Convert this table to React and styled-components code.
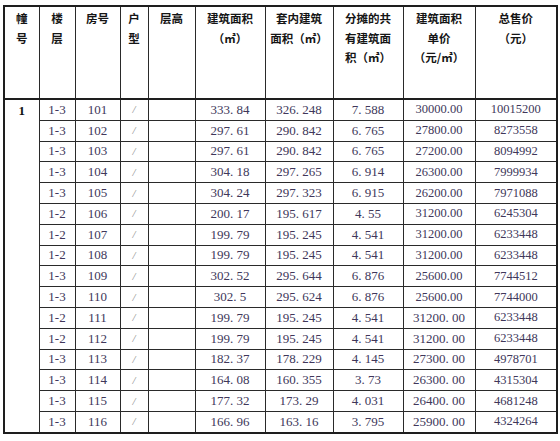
import React from "react";
import styled, { createGlobalStyle } from "styled-components";

const rows = [
  ["1-3", "101", "333.84", "326.248", "7.588", "30000.00", "10015200"],
  ["1-3", "102", "297.61", "290.842", "6.765", "27800.00", "8273558"],
  ["1-3", "103", "297.61", "290.842", "6.765", "27200.00", "8094992"],
  ["1-3", "104", "304.18", "297.265", "6.914", "26300.00", "7999934"],
  ["1-3", "105", "304.24", "297.323", "6.915", "26200.00", "7971088"],
  ["1-2", "106", "200.17", "195.617", "4.55", "31200.00", "6245304"],
  ["1-2", "107", "199.79", "195.245", "4.541", "31200.00", "6233448"],
  ["1-2", "108", "199.79", "195.245", "4.541", "31200.00", "6233448"],
  ["1-3", "109", "302.52", "295.644", "6.876", "25600.00", "7744512"],
  ["1-3", "110", "302.5", "295.624", "6.876", "25600.00", "7744000"],
  ["1-2", "111", "199.79", "195.245", "4.541", "31200.00", "6233448", true],
  ["1-2", "112", "199.79", "195.245", "4.541", "31200.00", "6233448", true],
  ["1-3", "113", "182.37", "178.229", "4.145", "27300.00", "4978701", true],
  ["1-3", "114", "164.08", "160.355", "3.73", "26300.00", "4315304", true],
  ["1-3", "115", "177.32", "173.29", "4.031", "26400.00", "4681248", true],
  ["1-3", "116", "166.96", "163.16", "3.795", "25900.00", "4324264", true],
];

const widths = [35, 36, 45, 28, 47, 70, 68, 70, 72, 82];

const headers = [
  ["幢", "号"],
  ["楼", "层"],
  ["房号"],
  ["户", "型"],
  ["层高"],
  ["建筑面积", "（㎡）"],
  ["套内建筑", "面积（㎡）"],
  ["分摊的共", "有建筑面", "积（㎡）"],
  ["建筑面积", "单价", "（元/㎡）"],
  ["总售价", "（元）"],
];

// song-style figures: the full stop takes a whole half-width cell
const wide = (s) => s.replace(".", ". ");

const GlobalStyle = createGlobalStyle`
  body {
    margin: 0;
    background: #ffffff;
  }
`;

const Page = styled.div`
  padding: 5px 0 0 3px;
`;

const Sheet = styled.table`
  width: 553px;
  border-collapse: collapse;
  table-layout: fixed;
  border: 2px solid #1e1e1e;
`;

const HeadCell = styled.th`
  height: 89px;
  padding: 2px 0 0;
  vertical-align: top;
  border: 1px solid #2a2a2a;
  border-bottom: 2px solid #1e1e1e;
  font-family: "Noto Sans CJK SC", sans-serif;
  font-size: 11.5px;
  font-weight: 700;
  line-height: 19.5px;
  color: #151515;
  text-align: center;
`;

const Cell = styled.td`
  height: 19.8px;
  padding: 0;
  border: 1px solid #2a2a2a;
  text-align: center;
  vertical-align: middle;
  color: #40375a;
  font-family: "Liberation Serif", serif;
  font-size: ${(p) => (p.$song ? "13px" : "12.5px")};
  white-space: pre;
`;

const BuildingCell = styled.td`
  padding: 1px 0 0;
  border: 1px solid #2a2a2a;
  vertical-align: top;
  text-align: center;
  font-family: "Liberation Serif", serif;
  font-size: 13px;
  font-weight: 700;
  line-height: 20px;
  color: #111;
`;

const Slash = styled.span`
  color: #8a8a8a;
  font-style: italic;
  font-size: 11px;
`;

export default function App() {
  return (
    <Page>
      <GlobalStyle />
      <Sheet>
        <colgroup>
          {widths.map((w, i) => (
            <col key={i} style={{ width: w }} />
          ))}
        </colgroup>
        <thead>
          <tr>
            {headers.map((lines, i) => (
              <HeadCell key={i}>
                {lines.map((l, j) => (
                  <div key={j}>{l}</div>
                ))}
              </HeadCell>
            ))}
          </tr>
        </thead>
        <tbody>
          {rows.map((r, i) => (
            <tr key={r[1]}>
              {i === 0 && <BuildingCell rowSpan={rows.length}>1</BuildingCell>}
              <Cell $song>{r[0]}</Cell>
              <Cell $song>{r[1]}</Cell>
              <Cell>
                <Slash>/</Slash>
              </Cell>
              <Cell />
              <Cell $song>{wide(r[2])}</Cell>
              <Cell $song>{wide(r[3])}</Cell>
              <Cell $song>{wide(r[4])}</Cell>
              {r[7] ? <Cell $song>{wide(r[5])}</Cell> : <Cell>{r[5]}</Cell>}
              <Cell>{r[6]}</Cell>
            </tr>
          ))}
        </tbody>
      </Sheet>
    </Page>
  );
}
